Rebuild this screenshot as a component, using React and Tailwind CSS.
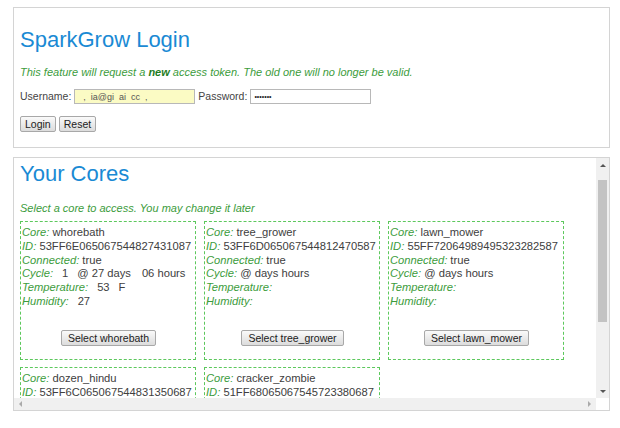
import React from 'react';

const cores = [
  {
    name: 'whorebath',
    id: '53FF6E065067544827431087',
    connected: 'true',
    cycle: ['1', '27', '06'],
    temp: '53',
    humidity: '27',
  },
  { name: 'tree_grower', id: '53FF6D065067544812470587', connected: 'true' },
  { name: 'lawn_mower', id: '55FF72064989495323282587', connected: 'true' },
  { name: 'dozen_hindu', id: '53FF6C065067544831350687', connected: 'true' },
  { name: 'cracker_zombie', id: '51FF68065067545723380687', connected: 'true' },
];

function Label({ children }) {
  return <span className="italic text-[#3c9c3c]">{children}:</span>;
}

function CoreCard({ core }) {
  return (
    <div className="w-[176px] h-[139px] shrink-0 border border-dashed border-[#5cc85c] pl-[1px] pt-[4px] flex flex-col whitespace-nowrap text-[11.2px] leading-[13.8px] text-[#404040]">
      <div>
        <Label>Core</Label> {core.name}
      </div>
      <div>
        <Label>ID</Label> {core.id}
      </div>
      <div>
        <Label>Connected</Label> {core.connected}
      </div>
      {core.cycle ? (
        <div>
          <Label>Cycle</Label>
          <span className="ml-[9px]">{core.cycle[0]}</span>
          <span className="ml-[9px]">@</span>
          <span className="ml-[3px]">{core.cycle[1]} days</span>
          <span className="ml-[11px]">{core.cycle[2]} hours</span>
        </div>
      ) : (
        <div>
          <Label>Cycle</Label> @ days hours
        </div>
      )}
      <div>
        <Label>Temperature</Label>
        {core.temp && (
          <>
            <span className="ml-[9px]">{core.temp}</span>
            <span className="ml-[9px]">F</span>
          </>
        )}
      </div>
      <div>
        <Label>Humidity</Label>
        {core.humidity && <span className="ml-[9px]">{core.humidity}</span>}
      </div>
      <div className="mt-auto mb-[13px] flex justify-center">
        <button className="h-[16px] px-[6px] text-[10.5px] leading-[14px] text-[#222] border border-[#a8a8a8] rounded-[2px] bg-gradient-to-b from-[#fafafa] to-[#dcdcdc]">
          Select {core.name}
        </button>
      </div>
    </div>
  );
}

function SmallButton({ children }) {
  return (
    <button className="h-[16px] px-[4px] text-[10.5px] leading-[14px] text-[#222] border border-[#a8a8a8] rounded-[2px] bg-gradient-to-b from-[#fafafa] to-[#dcdcdc]">
      {children}
    </button>
  );
}

export default function App() {
  return (
    <div className="w-[620px] h-[428px] bg-white pl-[13px] pr-[10px] pt-[7px] font-['Liberation_Sans',Arial,sans-serif] overflow-hidden">
      <section className="h-[141px] border border-[#d4d4d4] px-[6px] pt-[19px]">
        <h1 className="text-[22px] leading-[26px] text-[#1a8ad4]">SparkGrow Login</h1>
        <p className="mt-[12px] text-[11px] leading-[14px] italic text-[#3c9c3c]">
          This feature will request a <b className="text-[#1f7d1f]">new</b> access token. The old one will no longer be valid.
        </p>
        <div className="mt-[10px] flex items-center text-[10.5px] text-[#444]">
          <span>Username:</span>
          <input
            readOnly
            defaultValue="  ,  ia@gi  ai  cc  ,"
            className="ml-[3px] w-[121px] h-[15px] px-[3px] text-[9px] text-[#555] bg-[#fbfbc4] border border-[#b8b8b8] outline-none"
          />
          <span className="ml-[3px]">Password:</span>
          <input
            readOnly
            type="password"
            defaultValue="1234567"
            className="ml-[3px] w-[121px] h-[15px] px-[3px] text-[7px] text-[#222] bg-white border border-[#b8b8b8] outline-none"
          />
        </div>
        <div className="mt-[11px] flex gap-[3px]">
          <SmallButton>Login</SmallButton>
          <SmallButton>Reset</SmallButton>
        </div>
      </section>

      <section className="mt-[9px] h-[254px] border border-[#d4d4d4] flex flex-col">
        <div className="flex flex-1 min-h-0">
          <div className="flex-1 overflow-hidden pl-[6px] pt-[3px]">
            <h2 className="text-[22px] leading-[26px] text-[#1a8ad4]">Your Cores</h2>
            <p className="mt-[14px] text-[11px] leading-[14px] italic text-[#3c9c3c]">
              Select a core to access. You may change it later
            </p>
            <div className="mt-[6px] flex flex-wrap gap-x-[8px] gap-y-[7px] w-[560px]">
              {cores.map((c) => (
                <CoreCard key={c.name} core={c} />
              ))}
            </div>
          </div>
          <div className="w-[13px] bg-[#f0f0f0] flex flex-col items-center">
            <div className="h-[14px] flex items-center justify-center">
              <div className="w-0 h-0 border-l-[3px] border-r-[3px] border-b-[3px] border-l-transparent border-r-transparent border-b-[#555]" />
            </div>
            <div className="w-[9px] h-[142px] mt-[8px] bg-[#c3c3c3]" />
            <div className="mt-auto h-[14px] flex items-center justify-center">
              <div className="w-0 h-0 border-l-[3px] border-r-[3px] border-t-[3px] border-l-transparent border-r-transparent border-t-[#555]" />
            </div>
          </div>
        </div>
        <div className="h-[12px] flex">
          <div className="flex-1 bg-[#f0f0f0] flex items-center justify-between px-[5px]">
            <div className="w-0 h-0 border-t-[3px] border-b-[3px] border-r-[3px] border-t-transparent border-b-transparent border-r-[#aaa]" />
            <div className="w-0 h-0 border-t-[3px] border-b-[3px] border-l-[3px] border-t-transparent border-b-transparent border-l-[#aaa]" />
          </div>
          <div className="w-[13px] bg-white" />
        </div>
      </section>
    </div>
  );
}
